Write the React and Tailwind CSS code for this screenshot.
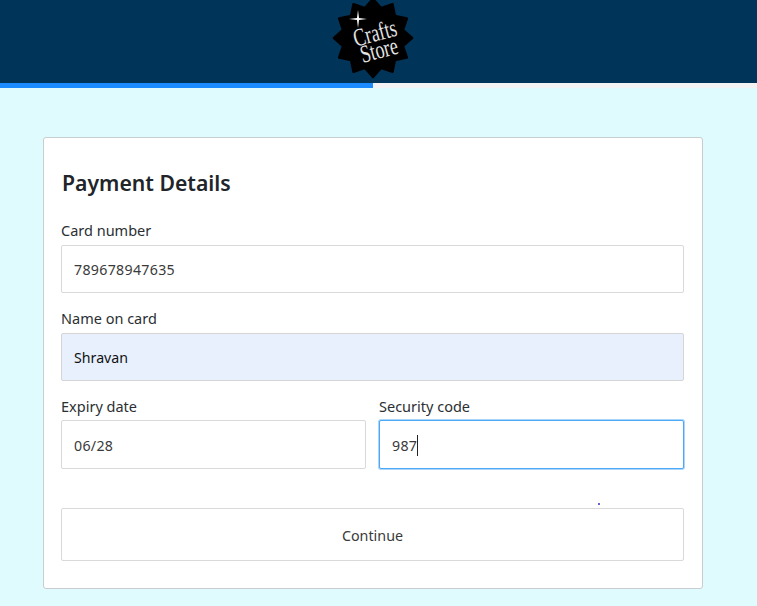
const FONT = "font-['Noto_Sans','Open_Sans',sans-serif]";

// 12 point badge behind the logo text
function starPoints(cx, cy, outer, inner, n) {
  const pts = [];
  for (let i = 0; i < n * 2; i++) {
    const r = i % 2 === 0 ? outer : inner;
    const a = Math.PI / 2 + (i * Math.PI) / n;
    pts.push(`${(cx + r * Math.cos(a)).toFixed(1)},${(cy + r * Math.sin(a)).toFixed(1)}`);
  }
  return pts.join(" ");
}

function Logo() {
  return (
    <svg width="84" height="83" viewBox="0 0 84 83" className="block mr-[11px]">
      <polygon points={starPoints(42, 38, 39, 31, 12)} fill="#000" stroke="#000" strokeWidth="2.5" strokeLinejoin="round" />
      <path d="M27 10 L28 18 L36 19 L28 20 L27 28 L26 20 L18 19 L26 18 Z" fill="#fff" />
      <g fill="#e4e4e4" fontFamily="'Liberation Serif', serif" textAnchor="middle">
        <text transform="translate(46 41) rotate(-15) scale(0.72 1)" fontSize="25">Crafts</text>
        <text transform="translate(50 58) rotate(-15) scale(0.72 1)" fontSize="25">Store</text>
      </g>
    </svg>
  );
}

function Field({ label, value, className = "", labelClass = "mb-[4px]", filled, focused, digits, tall }) {
  return (
    <div className={className}>
      <div className={`text-[14.5px] leading-[21px] text-[#2b2f33] ${labelClass}`}>{label}</div>
      <div
        className={`${tall ? "h-[49px]" : "h-[48px]"} rounded-[2px] border px-[12px] pt-[2px] flex items-center text-[14.2px] ${digits ? "tracking-[0.3px]" : ""} ${
          filled
            ? "bg-[#e8f0fe] border-[#d5d5d5] text-[#111]"
            : focused
              ? "bg-white border-[#4da8f5] ring-1 ring-[#a9d6fa] text-[#3a3a3a]"
              : "bg-white border-[#d9d9d9] text-[#3a3a3a]"
        }`}
      >
        {value}
        {focused && <span className="w-px h-[21px] bg-[#222]" />}
      </div>
    </div>
  );
}

export default function App() {
  return (
    <div className={`${FONT} min-h-[606px] bg-[#dffbfd] overflow-hidden`}>
      <div className="h-[83px] bg-[#003459] flex justify-center overflow-hidden">
        <Logo />
      </div>
      <div className="h-[5px] bg-[#f3f3f3]">
        <div className="h-full w-[373px] bg-[#1a8cff]" />
      </div>

      <div className="ml-[43px] mt-[49px] w-[660px] h-[452px] relative rounded-[3px] border border-[#c8cdd0] bg-white pl-[17px] pr-[18px] pt-[30px]">
        <h2 className="pl-px text-[21.2px] leading-[29px] font-semibold text-[#212529] mb-[23px]">Payment Details</h2>
        <Field label="Card number" value="789678947635" digits className="mb-[15px]" />
        <Field label="Name on card" value="Shravan" filled className="mb-[15px]" />
        <div className="flex gap-[13px]">
          <Field label="Expiry date" value="06/28" digits tall labelClass="mb-[3px]" className="flex-1" />
          <Field label="Security code" value="987" digits tall focused labelClass="mb-[3px]" className="flex-1" />
        </div>
        <span className="absolute left-[554px] top-[365px] w-[2px] h-[2px] rounded-full bg-[#3030c0]" />
        <button className="mt-[39px] pt-[2px] w-full h-[53px] rounded-[2px] border border-[#d9d9d9] bg-white text-[14.3px] text-[#3a3a3a]">
          Continue
        </button>
      </div>
    </div>
  );
}
